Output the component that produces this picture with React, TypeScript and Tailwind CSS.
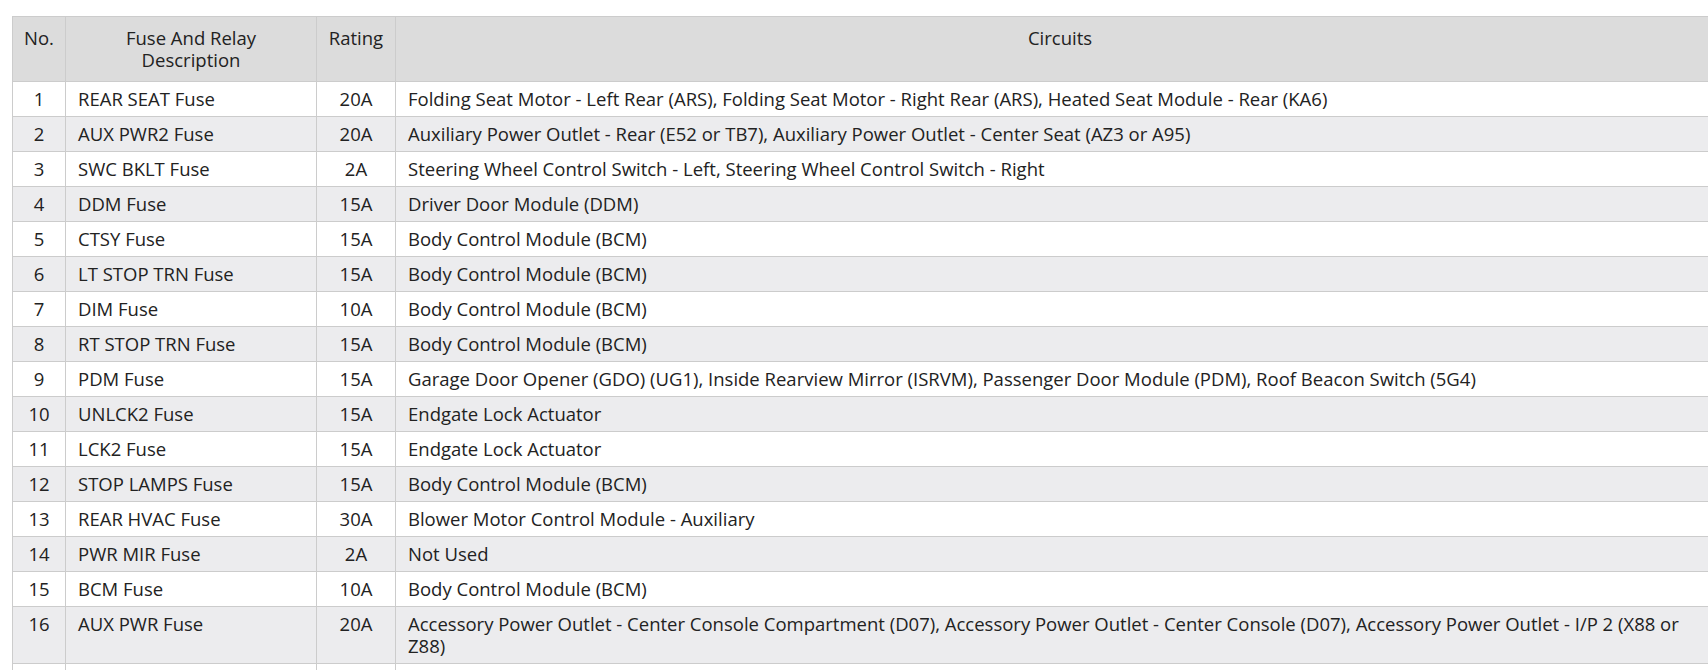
import React from "react";

type Row = { no: number; name: string; rating: string; circuits: string };

const rows: Row[] = [
  { no: 1, name: "REAR SEAT Fuse", rating: "20A", circuits: "Folding Seat Motor - Left Rear (ARS), Folding Seat Motor - Right Rear (ARS), Heated Seat Module - Rear (KA6)" },
  { no: 2, name: "AUX PWR2 Fuse", rating: "20A", circuits: "Auxiliary Power Outlet - Rear (E52 or TB7), Auxiliary Power Outlet - Center Seat (AZ3 or A95)" },
  { no: 3, name: "SWC BKLT Fuse", rating: "2A", circuits: "Steering Wheel Control Switch - Left, Steering Wheel Control Switch - Right" },
  { no: 4, name: "DDM Fuse", rating: "15A", circuits: "Driver Door Module (DDM)" },
  { no: 5, name: "CTSY Fuse", rating: "15A", circuits: "Body Control Module (BCM)" },
  { no: 6, name: "LT STOP TRN Fuse", rating: "15A", circuits: "Body Control Module (BCM)" },
  { no: 7, name: "DIM Fuse", rating: "10A", circuits: "Body Control Module (BCM)" },
  { no: 8, name: "RT STOP TRN Fuse", rating: "15A", circuits: "Body Control Module (BCM)" },
  { no: 9, name: "PDM Fuse", rating: "15A", circuits: "Garage Door Opener (GDO) (UG1), Inside Rearview Mirror (ISRVM), Passenger Door Module (PDM), Roof Beacon Switch (5G4)" },
  { no: 10, name: "UNLCK2 Fuse", rating: "15A", circuits: "Endgate Lock Actuator" },
  { no: 11, name: "LCK2 Fuse", rating: "15A", circuits: "Endgate Lock Actuator" },
  { no: 12, name: "STOP LAMPS Fuse", rating: "15A", circuits: "Body Control Module (BCM)" },
  { no: 13, name: "REAR HVAC Fuse", rating: "30A", circuits: "Blower Motor Control Module - Auxiliary" },
  { no: 14, name: "PWR MIR Fuse", rating: "2A", circuits: "Not Used" },
  { no: 15, name: "BCM Fuse", rating: "10A", circuits: "Body Control Module (BCM)" },
  { no: 16, name: "AUX PWR Fuse", rating: "20A", circuits: "Accessory Power Outlet - Center Console Compartment (D07), Accessory Power Outlet - Center Console (D07), Accessory Power Outlet - I/P 2 (X88 or Z88)" },
  { no: 17, name: "", rating: "", circuits: "" },
];

const App = () => {
  return (
    <div className="h-[670px] w-[1708px] overflow-hidden bg-white pl-[12px] pt-[16px] font-['Open_Sans',sans-serif] text-[18.5px] text-[#222]">
      <table className="w-[1713px] table-fixed border-collapse">
        <colgroup>
          <col className="w-[53px]" />
          <col className="w-[251px]" />
          <col className="w-[79px]" />
          <col />
        </colgroup>
        <thead>
          <tr className="bg-[#dcdcdc]">
            <th className="border border-[#cccccc] px-1 pt-[10px] pb-[10px] align-top text-center font-normal leading-[22px]">No.</th>
            <th className="border border-[#cccccc] px-1 pt-[10px] pb-[10px] align-top text-center font-normal leading-[22px]">
              Fuse And Relay
              <br />
              Description
            </th>
            <th className="border border-[#cccccc] px-1 pt-[10px] pb-[10px] align-top text-center font-normal leading-[22px]">Rating</th>
            <th className="border border-[#cccccc] px-1 pt-[10px] pb-[10px] align-top text-center font-normal leading-[22px]">Circuits</th>
          </tr>
        </thead>
        <tbody>
          {rows.map((r, i) => (
            <tr key={r.no} className={i % 2 === 0 ? "bg-white" : "bg-[#ececee]"}>
              <td className="border border-[#cccccc] py-[6px] text-center align-top leading-[22px]">{r.no < 17 ? r.no : ""}</td>
              <td className="border border-[#cccccc] px-[12px] py-[6px] align-top leading-[22px]">{r.name}</td>
              <td className="border border-[#cccccc] py-[6px] text-center align-top leading-[22px]">{r.rating}</td>
              <td className="border border-[#cccccc] py-[6px] pl-[12px] pr-[24px] align-top leading-[22px]">{r.circuits}</td>
            </tr>
          ))}
        </tbody>
      </table>
    </div>
  );
};

export default App;
